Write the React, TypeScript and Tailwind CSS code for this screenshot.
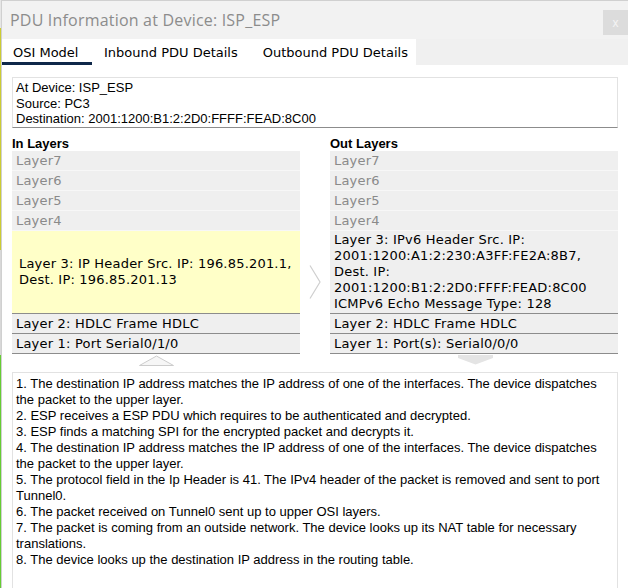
import React from 'react';

const upper = ['Layer7', 'Layer6', 'Layer5', 'Layer4'];

const steps = [
    '1. The destination IP address matches the IP address of one of the interfaces. The device dispatches the packet to the upper layer.',
    '2. ESP receives a ESP PDU which requires to be authenticated and decrypted.',
    '3. ESP finds a matching SPI for the encrypted packet and decrypts it.',
    '4. The destination IP address matches the IP address of one of the interfaces. The device dispatches the packet to the upper layer.',
    '5. The protocol field in the Ip Header is 41. The IPv4 header of the packet is removed and sent to port Tunnel0.',
    '6. The packet received on Tunnel0 sent up to upper OSI layers.',
    '7. The packet is coming from an outside network. The device looks up its NAT table for necessary translations.',
    '8. The device looks up the destination IP address in the routing table.',
];

const GrayRow = ({ label }: { label: string }) => (
    <div className="h-[20px] bg-[#efefef] border-b border-[#f7f7f7] pl-[4px] text-[13px] leading-[20px] text-[#8a8a8a]">
        {label}
    </div>
);

const LowerRow = ({ label }: { label: string }) => (
    <div className="h-[20px] bg-[#efefef] border-b border-[#8c8c8c] pl-[4px] text-[13px] leading-[19px] text-black">
        {label}
    </div>
);

export default function App() {
    return (
        <div className="w-[628px] h-[588px] flex bg-white overflow-hidden">
            <div className="w-[1px] flex flex-col">
                <div className="h-[28px] bg-[#e6e6e6]" />
                <div className="h-[222px] bg-[#cccc33]" />
                <div className="h-[105px] bg-[#d8d8d8]" />
                <div className="flex-1 bg-[#66cc33]" />
            </div>
            <div className="flex-1 flex flex-col border-l border-t border-[#d0d0d0]">
                {/* title bar */}
                <div className="h-[38px] bg-[#f2f2f2] flex items-start">
                    <div className="flex-1 pl-[8px] pt-[9px] text-[16px] leading-[20px] tracking-[0.2px] text-[#8c8c8c] font-['Open_Sans','Noto_Sans',sans-serif]">
                        PDU Information at Device: ISP_ESP
                    </div>
                    <div className="mt-[9px] w-[25px] h-[25px] bg-[#dcdcdc] flex items-center justify-center text-[12px] text-[#f4f4f4] font-['Liberation_Sans',Arial,sans-serif]">
                        x
                    </div>
                </div>

                {/* tabs */}
                <div className="h-[26px] flex bg-[#f0f0f0] text-[13px] text-black font-['DejaVu_Sans',sans-serif]">
                    <div className="w-[414px] bg-white flex items-stretch">
                        <div className="w-[90px] pl-[11px] pt-[4px] border-b-[3px] border-[#0f2849]">OSI Model</div>
                        <div className="pl-[12px] pt-[4px]">Inbound PDU Details</div>
                        <div className="pl-[25px] pt-[4px]">Outbound PDU Details</div>
                    </div>
                </div>

                {/* body */}
                <div className="flex-1 flex flex-col pl-[10px] pr-[10px] pt-[12px]">
                    <div className="h-[51px] border border-[#e2e2e2] border-b-[#8c8c8c] pl-[3px] pt-[2px] text-[13px] leading-[15.5px] text-black font-['Liberation_Sans',Arial,sans-serif]">
                        <div>At Device: ISP_ESP</div>
                        <div>Source: PC3</div>
                        <div>Destination: 2001:1200:B1:2:2D0:FFFF:FEAD:8C00</div>
                    </div>

                    <div className="flex mt-[8px]">
                        {/* in layers */}
                        <div className="w-[288px] flex flex-col">
                            <div className="h-[15px] text-[13px] leading-[15px] font-bold text-black font-['Liberation_Sans',Arial,sans-serif]">
                                In Layers
                            </div>
                            <div className="tracking-[0.2px] font-['DejaVu_Sans',sans-serif]">
                                {upper.map((l) => (
                                    <GrayRow key={l} label={l} />
                                ))}
                                <div className="h-[83px] bg-[#ffffc8] border-b border-[#8c8c8c] pl-[7px] flex flex-col justify-center text-[13px] leading-[16px] text-black">
                                    <div>Layer 3: IP Header Src. IP: 196.85.201.1,</div>
                                    <div>Dest. IP: 196.85.201.13</div>
                                </div>
                                <LowerRow label="Layer 2: HDLC Frame HDLC" />
                                <LowerRow label="Layer 1: Port Serial0/1/0" />
                            </div>
                            <div className="flex justify-center pt-[1px]">
                                <svg width="35" height="11" viewBox="0 0 35 11">
                                    <polygon points="0.5,10.5 17.5,1 34.5,10.5" fill="#f6f6f6" stroke="#cccccc" />
                                </svg>
                            </div>
                        </div>

                        {/* arrow */}
                        <div className="w-[30px] flex items-start justify-center pt-[129px]">
                            <svg width="12" height="34" viewBox="0 0 12 34">
                                <polyline points="1,0.5 11,17 1,33.5" fill="none" stroke="#cfcfcf" strokeWidth="1.2" />
                            </svg>
                        </div>

                        {/* out layers */}
                        <div className="flex-1 flex flex-col">
                            <div className="h-[15px] text-[13px] leading-[15px] font-bold text-black font-['Liberation_Sans',Arial,sans-serif]">
                                Out Layers
                            </div>
                            <div className="tracking-[0.2px] font-['DejaVu_Sans',sans-serif]">
                                {upper.map((l) => (
                                    <GrayRow key={l} label={l} />
                                ))}
                                <div className="h-[83px] bg-[#efefef] border-b border-[#8c8c8c] pl-[4px] pt-[1px] text-[13px] leading-[16px] text-black">
                                    <div>Layer 3: IPv6 Header Src. IP:</div>
                                    <div>2001:1200:A1:2:230:A3FF:FE2A:8B7,</div>
                                    <div>Dest. IP:</div>
                                    <div>2001:1200:B1:2:2D0:FFFF:FEAD:8C00</div>
                                    <div>ICMPv6 Echo Message Type: 128</div>
                                </div>
                                <LowerRow label="Layer 2: HDLC Frame HDLC" />
                                <LowerRow label="Layer 1: Port(s): Serial0/0/0" />
                            </div>
                            <div className="flex justify-center pl-[2px] pt-[1px]">
                                <svg width="35" height="10" viewBox="0 0 35 10">
                                    <polygon points="0,0 35,0 35,3 17.5,9.5 0,3" fill="#e4e4e4" />
                                </svg>
                            </div>
                        </div>
                    </div>

                    <div className="mt-[6px] flex-1 border border-[#e2e2e2] border-b-0 pl-[3px] pt-[3px] text-[13px] leading-[16px] text-black font-['Liberation_Sans',Arial,sans-serif]">
                        {steps.map((s) => (
                            <div key={s}>{s}</div>
                        ))}
                    </div>
                </div>
            </div>
        </div>
    );
}
